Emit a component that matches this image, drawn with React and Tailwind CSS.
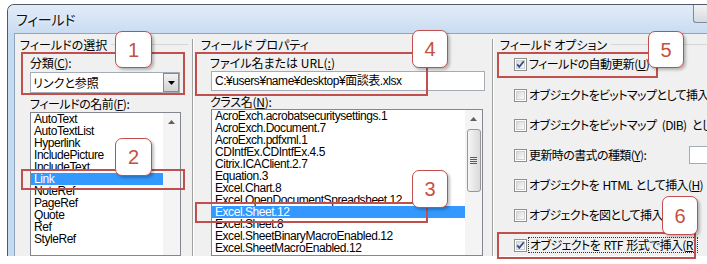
import React from "react";

const fieldNames = ["AutoText", "AutoTextList", "Hyperlink", "IncludePicture", "IncludeText", "Link", "NoteRef", "PageRef", "Quote", "Ref", "StyleRef"];
const classNames = [
  "AcroExch.acrobatsecuritysettings.1",
  "AcroExch.Document.7",
  "AcroExch.pdfxml.1",
  "CDIntfEx.CDIntfEx.4.5",
  "Citrix.ICAClient.2.7",
  "Equation.3",
  "Excel.Chart.8",
  "Excel.OpenDocumentSpreadsheet.12",
  "Excel.Sheet.12",
  "Excel.Sheet.8",
  "Excel.SheetBinaryMacroEnabled.12",
  "Excel.SheetMacroEnabled.12",
];

function UpArrow() {
  return (
    <svg width="7" height="4" viewBox="0 0 7 4">
      <path d="M0 4 L3.5 0 L7 4 Z" fill="#606060" />
    </svg>
  );
}

function CheckBox({ checked }) {
  return (
    <span className="relative w-[13px] h-[13px] shrink-0 border border-[#8e8f8f] bg-white p-px flex">
      <span className="flex-1 border border-[#cfcfcf] bg-gradient-to-br from-[#dadada] to-[#fbfbfb]" />
      {checked && (
        <svg className="absolute inset-0" width="11" height="11" viewBox="0 0 11 11">
          <path d="M2.2 5.4 L4.3 7.8 L8.8 2.3" stroke="#2d4f91" strokeWidth="1.8" fill="none" />
        </svg>
      )}
    </span>
  );
}

function ListItem({ text, selected }) {
  return (
    <div
      className={
        selected
          ? "h-[12px] leading-[12px] pl-[3px] whitespace-nowrap bg-[#3399ff] text-white"
          : "h-[12px] leading-[12px] pl-[3px] whitespace-nowrap"
      }
    >
      {text}
    </div>
  );
}

export default function App() {
  return (
    <div className="relative w-[707px] h-[264px] bg-white overflow-hidden font-['Noto_Sans_CJK_JP',sans-serif] text-[12px] text-black [font-feature-settings:'palt']">
      <div className="ml-[7px] mt-[4px] h-[252px] flex flex-col border-l border-t border-[#4f5b68] rounded-tl-[7px] bg-[#c6daf0] overflow-hidden">
        {/* title bar */}
        <div className="h-[28px] shrink-0 flex items-center pl-[8px] bg-gradient-to-b from-[#e2ecf8] to-[#cadcf2]">
          <span className="text-[14px] tracking-[-0.2px] text-[#111] [text-shadow:0_0_4px_#ffffff]">フィールド</span>
          <div className="ml-auto self-start mt-[-1px] w-[14px] h-[19px] rounded-bl-[3px] border-l border-b border-[#7f8a98] bg-gradient-to-b from-[#f4f4f4] to-[#d6dadf]" />
        </div>
        {/* body */}
        <div className="flex-1 flex pl-[6px] min-h-0">
          <div className="flex-1 flex min-w-0 bg-[#f0f0f0] border-l border-t border-[#8ea4bf]">
            {/* column 1 */}
            <div className="w-[177px] shrink-0 flex flex-col pt-[4px]">
              <div className="h-[13px] leading-[13px] pl-[5px] pr-[4px] flex items-center gap-[4px]">
                <span>フィールドの選択</span>
                <span className="flex-1 h-px bg-[#d5d5d5]" />
              </div>
              <div className="mt-[5px] h-[13px] leading-[13px] pl-[15px] tracking-[-0.3px]">
                分類(<span className="underline">C</span>):
              </div>
              <div className="mt-[3px] ml-[15px] w-[150px] h-[21px] border border-[#a5acb5] bg-white flex items-center">
                <span className="flex-1 pl-[2px]">リンクと参照</span>
                <span className="w-[16px] h-[19px] border border-[#8a8a8a] bg-gradient-to-b from-[#f3f3f3] to-[#d2d2d2] flex items-center justify-center">
                  <svg width="7" height="4" viewBox="0 0 7 4">
                    <path d="M0 0 L7 0 L3.5 4 Z" fill="#000" />
                  </svg>
                </span>
              </div>
              <div className="mt-[4px] h-[13px] leading-[13px] pl-[15px] tracking-[-0.5px]">
                フィールドの名前(<span className="underline">F</span>):
              </div>
              <div className="mt-[2px] ml-[15px] w-[151px] flex-1 border border-[#828790] bg-white flex min-h-0">
                <div className="flex-1 flex flex-col font-['Liberation_Sans','Noto_Sans_CJK_JP',sans-serif] tracking-[-0.45px]">
                  {fieldNames.map((n) => (
                    <ListItem key={n} text={n} selected={n === "Link"} />
                  ))}
                </div>
                <div className="w-[17px] bg-[#f4f4f4] flex flex-col items-center">
                  <div className="h-[17px] flex items-center justify-center">
                    <UpArrow />
                  </div>
                </div>
              </div>
            </div>
            {/* separator */}
            <div className="w-[2px] shrink-0 mt-[5px] border-l border-r border-l-[#a0a0a0] border-r-white" />
            {/* column 2 */}
            <div className="w-[298px] shrink-0 flex flex-col pt-[4px]">
              <div className="h-[13px] leading-[13px] pl-[7px] whitespace-pre">フィールド プロパティ</div>
              <div className="mt-[5px] h-[13px] leading-[13px] pl-[16px] whitespace-pre">
                ファイル名または URL(<span className="underline">:</span>)
              </div>
              <div className="mt-[2px] ml-[17px] w-[274px] h-[20px] border border-[#a5acb5] bg-white flex items-center pl-[3px] font-['Liberation_Sans','Noto_Sans_CJK_JP',sans-serif] tracking-[-0.45px] whitespace-nowrap">
                C:¥users¥name¥desktop¥面談表.xlsx
              </div>
              <div className="mt-[4px] h-[13px] leading-[13px] pl-[16px] tracking-[-0.3px]">
                クラス名(<span className="underline">N</span>):
              </div>
              <div className="mt-[1px] ml-[17px] w-[272px] flex-1 border border-[#828790] bg-white flex min-h-0">
                <div className="flex-1 flex flex-col font-['Liberation_Sans','Noto_Sans_CJK_JP',sans-serif] tracking-[-0.45px]">
                  {classNames.map((n) => (
                    <ListItem key={n} text={n} selected={n === "Excel.Sheet.12"} />
                  ))}
                </div>
                <div className="w-[17px] bg-[#f4f4f4] flex flex-col items-center">
                  <div className="h-[17px] flex items-center justify-center">
                    <UpArrow />
                  </div>
                  <div className="mt-[2px] w-[14px] h-[63px] rounded-[3px] border border-[#979797] bg-gradient-to-r from-[#f5f5f5] to-[#dadada] flex flex-col items-center justify-center gap-[1px]">
                    <span className="w-[7px] h-px bg-[#5a5a5a]" />
                    <span className="w-[7px] h-px bg-[#5a5a5a]" />
                    <span className="w-[7px] h-px bg-[#5a5a5a]" />
                    <span className="w-[7px] h-px bg-[#5a5a5a]" />
                  </div>
                </div>
              </div>
            </div>
            {/* separator */}
            <div className="w-[2px] shrink-0 mt-[5px] border-l border-r border-l-[#a0a0a0] border-r-white" />
            {/* column 3 */}
            <div className="flex-1 min-w-0 overflow-hidden flex flex-col pt-[4px]">
              <div className="h-[13px] leading-[13px] pl-[6px] flex items-center gap-[4px]">
                <span className="whitespace-pre">フィールド オプション</span>
                <span className="flex-1 h-px bg-[#d5d5d5]" />
              </div>
              <div className="mt-[-3px] flex flex-col pl-[20px] whitespace-nowrap tracking-[-0.6px]">
                <div className="h-[32px] flex items-center gap-[2px]">
                  <CheckBox checked />
                  <span>
                    フィールドの自動更新(<span className="underline">U</span>)
                  </span>
                </div>
                <div className="h-[30px] flex items-center gap-[2px]">
                  <CheckBox />
                  <span>
                    オブジェクトをビットマップとして挿入(<span className="underline">B</span>)
                  </span>
                </div>
                <div className="h-[30px] flex items-center gap-[2px]">
                  <CheckBox />
                  <span>{"オブジェクトをビットマップ\u2002(DIB)\u2002として挿入(D)"}</span>
                </div>
                <div className="h-[30px] flex items-center gap-[2px]">
                  <CheckBox />
                  <span>
                    更新時の書式の種類(<span className="underline">Y</span>):
                  </span>
                  <span className="ml-auto w-[18px] h-[18px] shrink-0 border border-r-0 border-[#a5acb5] bg-white" />
                </div>
                <div className="h-[30px] flex items-center gap-[2px]">
                  <CheckBox />
                  <span>
                    {"オブジェクトを\u2004HTML\u2004として挿入("}<span className="underline">H</span>)
                  </span>
                </div>
                <div className="h-[30px] flex items-center gap-[2px]">
                  <CheckBox />
                  <span>
                    オブジェクトを図として挿入(<span className="underline">P</span>)
                  </span>
                </div>
                <div className="h-[30px] flex items-center gap-[1px]">
                  <CheckBox checked />
                  <span className="border border-dotted border-[#333] px-[1px] leading-[14px]">
                    {"オブジェクトを\u2004RTF\u2004形式で挿入("}<span className="underline">R</span>)
                  </span>
                </div>
              </div>
            </div>
          </div>
        </div>
      </div>

      {/* annotation boxes */}
      <div className="absolute left-[21px] top-[52px] w-[164px] h-[43px] border-2 border-[#c0504d]" />
      <div className="absolute left-[21px] top-[169px] w-[164px] h-[21px] border-2 border-[#c0504d]" />
      <div className="absolute left-[195px] top-[202px] w-[233px] h-[21px] border-2 border-[#c0504d]" />
      <div className="absolute left-[195px] top-[52px] w-[233px] h-[44px] border-2 border-[#c0504d]" />
      <div className="absolute left-[497px] top-[52px] w-[161px] h-[26px] border-2 border-[#c0504d]" />
      <div className="absolute left-[497px] top-[232px] w-[199px] h-[27px] border-2 border-[#c0504d]" />

      {/* badges */}
      <div className="absolute left-[115px] top-[31px] w-[37px] h-[37px] flex items-center justify-center bg-white border-[1.5px] border-[#c0504d] rounded-[7px] shadow-[2px_2px_3px_rgba(0,0,0,0.25)] text-[20px] text-[#c4513f] font-['Liberation_Sans',sans-serif]">1</div>
      <div className="absolute left-[115px] top-[138px] w-[37px] h-[38px] flex items-center justify-center bg-white border-[1.5px] border-[#c0504d] rounded-[7px] shadow-[2px_2px_3px_rgba(0,0,0,0.25)] text-[20px] text-[#c4513f] font-['Liberation_Sans',sans-serif]">2</div>
      <div className="absolute left-[412px] top-[170px] w-[36px] h-[38px] flex items-center justify-center bg-white border-[1.5px] border-[#c0504d] rounded-[7px] shadow-[2px_2px_3px_rgba(0,0,0,0.25)] text-[20px] text-[#c4513f] font-['Liberation_Sans',sans-serif]">3</div>
      <div className="absolute left-[412px] top-[30px] w-[36px] h-[38px] flex items-center justify-center bg-white border-[1.5px] border-[#c0504d] rounded-[7px] shadow-[2px_2px_3px_rgba(0,0,0,0.25)] text-[20px] text-[#c4513f] font-['Liberation_Sans',sans-serif]">4</div>
      <div className="absolute left-[648px] top-[31px] w-[36px] h-[37px] flex items-center justify-center bg-white border-[1.5px] border-[#c0504d] rounded-[7px] shadow-[2px_2px_3px_rgba(0,0,0,0.25)] text-[20px] text-[#c4513f] font-['Liberation_Sans',sans-serif]">5</div>
      <div className="absolute left-[662px] top-[196px] w-[36px] h-[39px] flex items-center justify-center bg-white border-[1.5px] border-[#c0504d] rounded-[7px] shadow-[2px_2px_3px_rgba(0,0,0,0.25)] text-[20px] text-[#c4513f] font-['Liberation_Sans',sans-serif]">6</div>
    </div>
  );
}
